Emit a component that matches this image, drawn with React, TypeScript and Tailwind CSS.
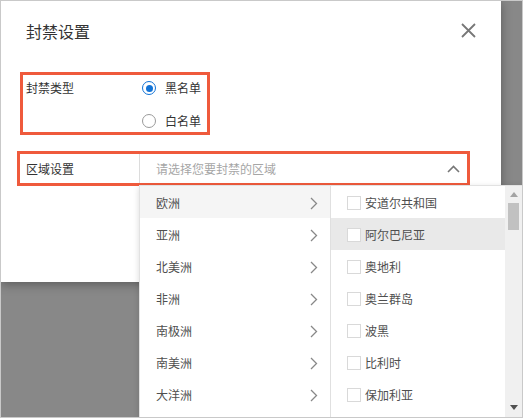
import React, { useState } from "react";

const continents = ["欧洲", "亚洲", "北美洲", "非洲", "南极洲", "南美洲", "大洋洲"];
const countries = ["安道尔共和国", "阿尔巴尼亚", "奥地利", "奥兰群岛", "波黑", "比利时", "保加利亚"];

const ChevronRight = () => (
  <svg width="8" height="13" viewBox="0 0 8 13" fill="none">
    <path d="M1 1l5.5 5.5L1 12" stroke="#888" strokeWidth="1.3" />
  </svg>
);

const ChevronUp = () => (
  <svg width="13" height="8" viewBox="0 0 13 8" fill="none">
    <path d="M1 7l5.5-5.5L12 7" stroke="#777" strokeWidth="1.6" />
  </svg>
);

const CloseIcon = () => (
  <svg width="15" height="15" viewBox="0 0 15 15" fill="none">
    <path d="M1 1l13 13M14 1L1 14" stroke="#777" strokeWidth="1.8" />
  </svg>
);

const Radio = ({ checked }: { checked: boolean }) =>
  checked ? (
    <span className="flex h-[14px] w-[14px] items-center justify-center rounded-full border-[1.5px] border-[#1273d6] bg-white">
      <span className="h-[7px] w-[7px] rounded-full bg-[#1273d6]" />
    </span>
  ) : (
    <span className="h-[14px] w-[14px] rounded-full border border-[#9a9a9a] bg-white" />
  );

export default function App() {
  const [type, setType] = useState("black");

  return (
    <div
      className="relative h-[418px] w-[523px] overflow-hidden border border-[#c9c9c9] bg-[#888888]"
      style={{ fontFamily: '"Noto Sans CJK SC", "Noto Sans", sans-serif' }}
    >
      {/* modal */}
      <div className="h-[281px] w-[500px] bg-white shadow-[0_2px_10px_rgba(0,0,0,0.35)]">
        <div className="flex h-[58px] items-center justify-between pl-[25px] pr-[25px] pt-[1px]">
          <span className="text-[16px] text-[#333]">封禁设置</span>
          <CloseIcon />
        </div>

        {/* 封禁类型 */}
        <div className="ml-[19px] mt-[13px] flex h-[63px] w-[190px] border-[3px] border-[#ef5a3c] pl-[3px] pt-[4px]">
          <div className="w-[116px] text-[12px] leading-[18px] text-[#333]">封禁类型</div>
          <div className="flex flex-col gap-[15px]">
            <label className="flex h-[18px] cursor-pointer items-center gap-[9px] text-[12px] text-[#333]" onClick={() => setType("black")}>
              <Radio checked={type === "black"} />
              黑名单
            </label>
            <label className="flex h-[18px] cursor-pointer items-center gap-[9px] text-[12px] text-[#333]" onClick={() => setType("white")}>
              <Radio checked={type === "white"} />
              白名单
            </label>
          </div>
        </div>

        {/* 区域设置 */}
        <div className="ml-[16px] mt-[16px] flex h-[35px] w-[453px] border-[3px] border-[#ef5a3c]">
          <div className="flex w-[119px] items-center pl-[6px] text-[12px] text-[#333]">区域设置</div>
          <div className="flex flex-1 items-center justify-between border-l border-[#dcdcdc] pl-[16px] pr-[7px]">
            <span className="text-[12px] text-[#a6a6a6]">请选择您要封禁的区域</span>
            <ChevronUp />
          </div>
        </div>
      </div>

      {/* dropdown */}
      <div className="absolute bottom-0 left-[138px] right-0 top-[184px] flex border-l border-t border-[#e2e2e2] bg-white shadow-[0_2px_6px_rgba(0,0,0,0.15)]">
        <div className="w-[191px] border-r border-[#e0e0e0]">
          {continents.map((c, i) => (
            <div
              key={c}
              className={`flex h-[32px] items-center justify-between pl-[16px] pr-[12px] pt-[2px] text-[12px] text-[#4f4f4f] ${i === 0 ? "bg-[#f5f5f5]" : ""}`}
            >
              <span>{c}</span>
              <ChevronRight />
            </div>
          ))}
        </div>
        <div className="flex-1">
          {countries.map((c, i) => (
            <div
              key={c}
              className={`flex h-[32px] items-center gap-[4px] pl-[16px] pt-[2px] text-[12px] text-[#4f4f4f] ${i === 1 ? "bg-[#e9e9e9]" : ""}`}
            >
              <span className="h-[14px] w-[14px] border border-[#d9d9d9] bg-white" />
              <span>{c}</span>
            </div>
          ))}
        </div>
        {/* scrollbar */}
        <div className="flex w-[17px] flex-col items-center bg-[#f0f0f0]">
          <svg className="mt-[6px]" width="8" height="5" viewBox="0 0 8 5">
            <path d="M0 5L4 0l4 5z" fill="#a3a3a3" />
          </svg>
          <div className="mt-[6px] h-[27px] w-[11px] bg-[#c1c1c1]" />
          <div className="flex-1" />
          <svg className="mb-[7px]" width="8" height="5" viewBox="0 0 8 5">
            <path d="M0 0l4 5 4-5z" fill="#505050" />
          </svg>
        </div>
      </div>
    </div>
  );
}
